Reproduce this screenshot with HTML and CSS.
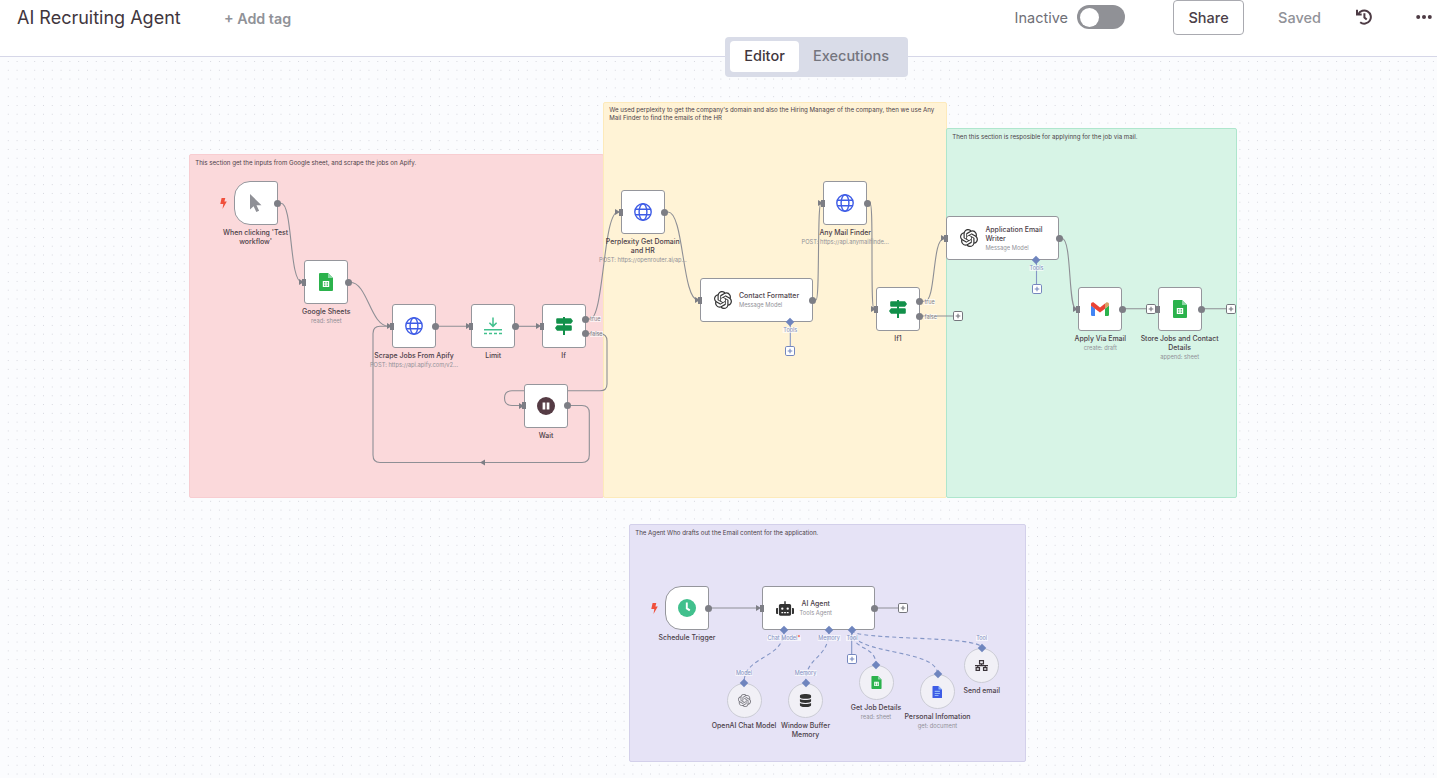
FILE: index.html
```html
<!DOCTYPE html>
<html lang="en">
<head>
    <meta charset="UTF-8">
    <meta name="viewport" content="width=device-width, initial-scale=1.0">
    <title>AI Recruiting Agent</title>
    <link rel="stylesheet" href="styles.css">
</head>
<body>
    <!-- icon definitions -->
    <svg class="defs" width="0" height="0">
        <symbol id="bolt" viewBox="0 0 7 11"><path d="M1.6 0h3.7L4.4 3.5h2.4L2.5 11l.8-4.9H.3z"/></symbol>
        <symbol id="cursor" viewBox="0 0 12 18"><path d="M0 0v15.4l3.6-3.2 2.7 5.8 2.8-1.3-2.6-5.5h5z"/></symbol>
        <symbol id="sheet" viewBox="0 0 14 18">
            <path fill="#2bb24c" d="M1 0h8l5 5v12a1 1 0 0 1-1 1H1a1 1 0 0 1-1-1V1a1 1 0 0 1 1-1z"/>
            <path fill="#8bd8a6" d="M9 0l5 5H9z"/>
            <path fill="#fff" fill-rule="evenodd" d="M3.8 8h6.4v6H3.8zM5 9.2v1.3h1.4V9.2zm2.6 0v1.3H9V9.2zM5 11.5v1.3h1.4v-1.3zm2.6 0v1.3H9v-1.3z"/>
        </symbol>
        <symbol id="globe" viewBox="0 0 18 18">
            <g fill="none" stroke="#3e5ce6" stroke-width="1.4">
                <circle cx="9" cy="9" r="8.2"/>
                <ellipse cx="9" cy="9" rx="3.9" ry="8.2"/>
                <path d="M1.3 6.2h15.4M1.3 11.8h15.4"/>
            </g>
        </symbol>
        <symbol id="limit" viewBox="0 0 18 18">
            <path fill="none" stroke="#41c08d" stroke-width="1.5" d="M9 .5v8.6M5.4 5.8L9 9.4l3.6-3.6M0 12.7h18"/>
            <path fill="none" stroke="#41c08d" stroke-width="1.5" stroke-dasharray="3 2" d="M0 16.6h18"/>
        </symbol>
        <symbol id="sign" viewBox="0 0 18 18">
            <path fill="#12904a" d="M8 0h2v1.2h6L18 4l-2 2.8H2.2a1 1 0 0 1-1-1V2.2a1 1 0 0 1 1-1H8zM8 6.8h2v1.4h5.8a1 1 0 0 1 1 1v3.6a1 1 0 0 1-1 1H2L0 11l2-2.8h6zM8 13.8h2V18H8z"/>
        </symbol>
        <symbol id="pause" viewBox="0 0 18 18">
            <circle cx="9" cy="9" r="9" fill="#553b44"/>
            <path fill="#fff" d="M5.6 5.4h2.7v7.2H5.6zM9.7 5.4h2.7v7.2H9.7z"/>
        </symbol>
        <symbol id="openai" viewBox="0 0 24 24"><path d="M22.2819 9.8211a5.9847 5.9847 0 0 0-.5157-4.9108 6.0462 6.0462 0 0 0-6.5098-2.9A6.0651 6.0651 0 0 0 4.9807 4.1818a5.9847 5.9847 0 0 0-3.9977 2.9 6.0462 6.0462 0 0 0 .7427 7.0966 5.98 5.98 0 0 0 .511 4.9107 6.051 6.051 0 0 0 6.5146 2.9001A5.9847 5.9847 0 0 0 13.2599 24a6.0557 6.0557 0 0 0 5.7718-4.2058 5.9894 5.9894 0 0 0 3.9977-2.9001 6.0557 6.0557 0 0 0-.7475-7.0729zm-9.022 12.6081a4.4755 4.4755 0 0 1-2.8764-1.0408l.1419-.0804 4.7783-2.7582a.7948.7948 0 0 0 .3927-.6813v-6.7369l2.02 1.1686a.071.071 0 0 1 .038.052v5.5826a4.504 4.504 0 0 1-4.4945 4.4944zm-9.6607-4.1254a4.4708 4.4708 0 0 1-.5346-3.0137l.142.0852 4.783 2.7582a.7712.7712 0 0 0 .7806 0l5.8428-3.3685v2.3324a.0804.0804 0 0 1-.0332.0615L9.74 19.9502a4.4992 4.4992 0 0 1-6.1408-1.6464zM2.3408 7.8956a4.485 4.485 0 0 1 2.3655-1.9728V11.6a.7664.7664 0 0 0 .3879.6765l5.8144 3.3543-2.0201 1.1685a.0757.0757 0 0 1-.071 0l-4.8303-2.7865A4.504 4.504 0 0 1 2.3408 7.872zm16.5963 3.8558L13.1038 8.364 15.1192 7.2a.0757.0757 0 0 1 .071 0l4.8303 2.7913a4.4944 4.4944 0 0 1-.6765 8.1042v-5.6772a.79.79 0 0 0-.407-.667zm2.0107-3.0231l-.142-.0852-4.7735-2.7818a.7759.7759 0 0 0-.7854 0L9.409 9.2297V6.8974a.0662.0662 0 0 1 .0284-.0615l4.8303-2.7866a4.4992 4.4992 0 0 1 6.6802 4.66zM8.3065 12.863l-2.02-1.1638a.0804.0804 0 0 1-.038-.0567V6.0742a4.4992 4.4992 0 0 1 7.3757-3.4537l-.142.0805L8.704 5.459a.7948.7948 0 0 0-.3927.6813zm1.0976-2.3654l2.602-1.4998 2.6069 1.4998v2.9994l-2.5974 1.4997-2.6067-1.4997Z"/></symbol>
        <symbol id="gmail" viewBox="0 0 18 14">
            <path fill="#4285f4" d="M0 3.5l4 3V14H1.2A1.2 1.2 0 0 1 0 12.8z"/>
            <path fill="#2bb24c" d="M18 3.5l-4 3V14h2.8a1.2 1.2 0 0 0 1.2-1.2z"/>
            <path fill="#d9a066" d="M14 1.6l1-.9c1.2-.9 3 0 3 1.5v1.6l-4 3z"/>
            <path fill="#ea4335" d="M4 1.6L3 .7C1.8-.2 0 .7 0 2.2v1.6l4 3z"/>
            <path fill="#ea4335" d="M4 1.6l5 3.8 5-3.8v5.2l-5 3.7-5-3.7z"/>
        </symbol>
        <symbol id="clock" viewBox="0 0 18 18">
            <circle cx="9" cy="9" r="9" fill="#41c08d"/>
            <path fill="none" stroke="#fff" stroke-width="1.9" d="M8.8 3.6v5.8l3 2"/>
        </symbol>
        <symbol id="robot" viewBox="0 0 20 16">
            <path fill-rule="evenodd" d="M9.2 0h1.6v3H15a1.8 1.8 0 0 1 1.8 1.8v9.400A1.800 1.800 0 0 1 15 16H5a1.800 1.800 0 0 1-1.800-1.800V4.800A1.800 1.800 0 0 1 5 3h4.200zM7 6.800a1.300 1.300 0 1 0 0 2.600 1.300 1.300 0 0 0 0-2.600zm6 0a1.300 1.300 0 1 0 0 2.600 1.300 1.300 0 0 0 0-2.600zM6 12v1.200h2V12zm3 0v1.200h2V12zm3 0v1.200h2V12zM0 8.500a1 1 0 0 1 1-1h1.200V14H1a1 1 0 0 1-1-1zM17.800 7.500H19a1 1 0 0 1 1 1V13a1 1 0 0 1-1 1h-1.200z"/>
        </symbol>
        <symbol id="database" viewBox="0 0 12 14">
            <path d="M0 2c0-2.7 12-2.7 12 0v1.4c0 2.4-12 2.4-12 0zM0 5.3c2.5 1.4 9.5 1.4 12 0v2.5c0 2.4-12 2.4-12 0zM0 9.7c2.5 1.4 9.5 1.4 12 0V12c0 2.7-12 2.7-12 0z"/>
        </symbol>
        <symbol id="doc" viewBox="0 0 10 13">
            <path fill="#3e5ce6" d="M.6 1H6l3.5 3.5v7.9a.6.6 0 0 1-.6.6H.6a.6.6 0 0 1-.6-.6V1.6A.6.6 0 0 1 .6 1z"/>
            <path fill="#8fb8f8" d="M6 1l3.5 3.5H6zM2.2 5.800h5.200v1.200H2.200zM2.200 7.900h5.200v1.200H2.200zM2.200 10h3.800v1H2.200z"/>
        </symbol>
        <symbol id="network" viewBox="0 0 14 12">
            <path fill="none" stroke="#3a3338" stroke-width="1.3" d="M4.9.8h4.2v3.4H4.9zM1.2 8.2h3.6v3H1.2zM9.2 8.2h3.6v3H9.2zM7 4.2v2M0 6.2h14M3 6.2v2M11 6.2v2"/>
        </symbol>
        <symbol id="plus" viewBox="0 0 10 10">
            <rect x=".5" y=".5" width="9" height="9" rx="1.3" fill="#fff" stroke="currentColor"/>
            <path d="M5 2.7v4.6M2.7 5h4.6" stroke="currentColor" stroke-width="1.1"/>
        </symbol>
    </svg>

    <header class="header">
        <div class="title">AI Recruiting Agent</div>
        <div class="add-tag">+ Add tag</div>
        <div class="actions">
            <span class="status">Inactive</span>
            <span class="toggle"></span>
            <button class="share">Share</button>
            <span class="saved">Saved</span>
            <svg class="history" viewBox="0 0 16 16"><path d="M2.3 5.2A6.6 6.6 0 1 1 4.2 13.3"/><path d="M1 .8v4.7h4.7M8.4 4.3v4.2l2.3 2"/></svg>
            <svg class="more" viewBox="0 0 16 4"><circle cx="2.2" cy="2" r="2"/><circle cx="8" cy="2" r="2"/><circle cx="13.8" cy="2" r="2"/></svg>
        </div>
    </header>
    <nav class="tabs">
        <span class="tab active">Editor</span>
        <span class="tab">Executions</span>
    </nav>

    <main class="canvas">
        <div class="sticky pink">This section get the inputs from Google sheet, and scrape the jobs on Apify.</div>
        <div class="sticky yellow">We used perplexity to get the company's domain and also the Hiring Manager of the company, then we use Any<br>Mail Finder to find the emails of the HR</div>
        <div class="sticky green">Then this section is resposible for applyinng for the job via mail.</div>
        <div class="sticky purple">The Agent Who drafts out the Email content for the application.</div>

        <!-- connections -->
        <svg class="edges" viewBox="0 0 1437 778">
            <g class="main">
                <path d="M278 203.3H281C293 203.3 289 282.3 302 282.3"/>
                <path d="M348 282.3H350C368 282.3 370 326.3 389 326.3"/>
                <path d="M436 326.3H469"/>
                <path d="M515 326.3H539"/>
                <path d="M586 319H590C604 319 603 212 618 212"/>
                <path d="M586 333.8H600Q607 333.8 607 341V384Q607 390.8 600 390.8H512Q504.5 390.8 504.5 398Q504.5 405.5 512 405.5H522"/>
                <path d="M568 405.5H582Q589.3 405.5 589.3 413V455Q589.3 462.5 582 462.5H380Q373 462.5 373 455V333.5Q373 326.3 380 326.3H389"/>
                <path d="M665 212H668C684 212 682 300 698 300"/>
                <path d="M813 300H816C820 300 817 203 821 203"/>
                <path d="M867 203H870C874 203 870 308.8 874 308.8"/>
                <path d="M920 301.3H925C936 301.3 932 238.5 944 238.5"/>
                <path d="M920 316H953"/>
                <path d="M1059 238.5H1062C1072 238.5 1068 308.8 1076 308.8"/>
                <path d="M1122 308.8H1147M1201.5 308.8H1226M874 608H899"/>
                <path d="M709 608H759"/>
            </g>
            <path class="arrowhead" d="M485 459.5v6l-5-3z"/>
            <g class="sub">
                <path d="M790.3 322V346M1036.5 260.5V285M851.7 630V655"/>
            </g>
            <g class="sub dashed">
                <path d="M784 630C784 660 744 655 744 683"/>
                <path d="M829 630C829 660 805.5 655 805.5 683"/>
                <path d="M851.7 630C851.7 652 876 644 876 665"/>
                <path d="M851.7 630C851.7 656 937.5 648 937.5 674"/>
                <path d="M851.7 630C851.7 641 981.7 635 981.7 648"/>
            </g>
        </svg>

        <div class="node trigger n-test"><svg class="bolt"><use href="#bolt"/></svg><svg class="icon cursor"><use href="#cursor"/></svg><i class="out"></i><div class="label">When clicking 'Test<br>workflow'</div></div>
        <div class="node n-sheets"><i class="in"></i><svg class="icon sheet"><use href="#sheet"/></svg><i class="out"></i><div class="label">Google Sheets<small>read: sheet</small></div></div>
        <div class="node n-scrape"><i class="in"></i><svg class="icon"><use href="#globe"/></svg><i class="out"></i><div class="label">Scrape Jobs From Apify<small>POST: https://api.apify.com/v2...</small></div></div>
        <div class="node n-limit"><i class="in"></i><svg class="icon"><use href="#limit"/></svg><i class="out"></i><div class="label">Limit</div></div>
        <div class="node n-if"><i class="in"></i><svg class="icon"><use href="#sign"/></svg><i class="out first"></i><i class="out second"></i><span class="port true">true</span><span class="port false">false</span><div class="label">If</div></div>
        <div class="node n-wait"><i class="in"></i><svg class="icon"><use href="#pause"/></svg><i class="out"></i><div class="label">Wait</div></div>
        <div class="node n-perplexity"><i class="in"></i><svg class="icon"><use href="#globe"/></svg><i class="out"></i><div class="label">Perplexity Get Domain<br>and HR<small>POST: https://openrouter.ai/ap...</small></div></div>
        <div class="node wide n-contact"><i class="in"></i><svg class="icon"><use href="#openai"/></svg><div class="text">Contact Formatter<small>Message Model</small></div><i class="out"></i><i class="diamond"></i></div>
        <div class="node n-anymail"><i class="in"></i><svg class="icon"><use href="#globe"/></svg><i class="out"></i><div class="label">Any Mail Finder<small>POST: https://api.anymailfinde...</small></div></div>
        <div class="node n-if1"><i class="in"></i><svg class="icon"><use href="#sign"/></svg><i class="out first"></i><i class="out second"></i><span class="port true">true</span><span class="port false">false</span><div class="label">If1</div></div>
        <div class="node wide n-writer"><i class="in"></i><svg class="icon"><use href="#openai"/></svg><div class="text">Application Email<br>Writer<small>Message Model</small></div><i class="out"></i><i class="diamond"></i></div>
        <div class="node n-apply"><i class="in"></i><svg class="icon gmail"><use href="#gmail"/></svg><i class="out"></i><div class="label">Apply Via Email<small>create: draft</small></div></div>
        <div class="node n-store"><i class="in"></i><svg class="icon sheet"><use href="#sheet"/></svg><i class="out"></i><div class="label">Store Jobs and Contact<br>Details<small>append: sheet</small></div></div>
        <div class="node trigger n-schedule"><svg class="bolt"><use href="#bolt"/></svg><svg class="icon"><use href="#clock"/></svg><i class="out"></i><div class="label">Schedule Trigger</div></div>
        <div class="node wide n-agent"><i class="in"></i><svg class="icon robot"><use href="#robot"/></svg><div class="text">AI Agent<small>Tools Agent</small></div><i class="out"></i><i class="diamond model"></i><i class="diamond memory"></i><i class="diamond tool"></i></div>

        <div class="node round n-openai"><i class="diamond"></i><svg class="icon"><use href="#openai"/></svg><div class="label">OpenAI Chat Model</div></div>
        <div class="node round n-memory"><i class="diamond"></i><svg class="icon"><use href="#database"/></svg><div class="label">Window Buffer<br>Memory</div></div>
        <div class="node round n-jobs"><i class="diamond"></i><svg class="icon"><use href="#sheet"/></svg><div class="label">Get Job Details<small>read: sheet</small></div></div>
        <div class="node round n-personal"><i class="diamond"></i><svg class="icon"><use href="#doc"/></svg><div class="label">Personal Infomation<small>get: document</small></div></div>
        <div class="node round n-send"><i class="diamond"></i><svg class="icon"><use href="#network"/></svg><div class="label">Send email</div></div>

        <span class="tag t-contact">Tools</span>
        <span class="tag t-writer">Tools</span>
        <span class="tag t-chat">Chat Model<b>*</b></span>
        <span class="tag t-mem">Memory</span>
        <span class="tag t-tool">Tool</span>
        <span class="tag t-model">Model</span>
        <span class="tag t-mem2">Memory</span>
        <span class="tag t-tool2">Tool</span>

        <svg class="plus p-if1"><use href="#plus"/></svg>
        <svg class="plus p-apply"><use href="#plus"/></svg>
        <svg class="plus p-store"><use href="#plus"/></svg>
        <svg class="plus p-agent"><use href="#plus"/></svg>
        <svg class="plus blue p-contact"><use href="#plus"/></svg>
        <svg class="plus blue p-writer"><use href="#plus"/></svg>
        <svg class="plus blue p-tool"><use href="#plus"/></svg>
    </main>
</body>
</html>
```

FILE: styles.css
```css
* {
    box-sizing: border-box;
}
body {
    margin: 0;
    height: 778px;
    overflow: hidden;
    position: relative;
    font-family: Inter, "Liberation Sans", sans-serif;
    color: #4b4048;
    background-color: #fbfcfe;
    background-image: radial-gradient(circle at 50% 50%, #d6d7de 0.6px, transparent 0.9px);
    background-size: 8.8px 8.8px;
    background-position: 3.9px 4.3px;
}
.defs {
    position: absolute;
}

/* header */
.header {
    display: flex;
    align-items: flex-start;
    height: 57px;
    padding: 0 5px 0 17px;
    background: #fff;
    border-bottom: 1px solid #d6d7e8;
    white-space: nowrap;
}
.title {
    width: 207px;
    font-size: 18px;
    line-height: 36px;
    color: #41363d;
}
.add-tag {
    font-size: 14.3px;
    font-weight: 600;
    line-height: 38px;
    color: #909298;
}
.actions {
    display: flex;
    align-items: center;
    height: 34px;
    margin-left: auto;
}
.status {
    font-size: 14.5px;
    color: #6f7077;
}
.toggle {
    width: 48px;
    height: 24px;
    margin-left: 9px;
    border-radius: 12px;
    background: #909196;
}
.toggle::before {
    content: "";
    display: block;
    width: 19px;
    height: 19px;
    margin: 2.5px;
    border-radius: 50%;
    background: #fff;
}
.share {
    width: 71px;
    height: 35px;
    margin-left: 48px;
    padding: 0;
    border: 1px solid #a9aab0;
    border-radius: 4px;
    background: #fff;
    font: 500 14.5px Inter, sans-serif;
    color: #4b4048;
}
.saved {
    margin-left: 34px;
    font-size: 14.5px;
    font-weight: 500;
    color: #919298;
}
.history {
    width: 16px;
    height: 16px;
    margin-left: 35px;
    fill: none;
    stroke: #4d3b44;
    stroke-width: 2;
}
.more {
    width: 16px;
    height: 4px;
    margin-left: 44px;
    fill: #4d3b44;
}
.tabs {
    position: absolute;
    left: 725px;
    top: 37px;
    display: flex;
    width: 183px;
    height: 40px;
    padding: 4px 5px 5px;
    border-radius: 4px;
    background: #d9dce8;
    font-size: 14.5px;
    font-weight: 500;
    line-height: 30px;
    color: #74757e;
}
.tab {
    flex: 1;
    text-align: center;
}
.tab.active {
    flex: 0 0 69px;
    border-radius: 4px;
    background: #fff;
    color: #41363d;
}

/* sticky notes */
.sticky {
    position: absolute;
    padding: 4px 5.2px;
    border: 1px solid;
    border-radius: 2px;
    font-size: 6.16px;
    line-height: 8px;
    white-space: nowrap;
    color: #4b4148;
}
.pink {
    left: 189px;
    top: 154px;
    width: 415px;
    height: 344px;
    background: #fbd9db;
    border-color: #f8cdd1;
}
.yellow {
    left: 603px;
    top: 102px;
    width: 344px;
    height: 396px;
    padding-top: 3px;
    background: #fff3d6;
    border-color: #fdeabb;
}
.green {
    left: 946px;
    top: 128px;
    width: 291px;
    height: 370px;
    background: #d7f4e6;
    border-color: #aee6cd;
}
.purple {
    left: 629px;
    top: 524px;
    width: 397px;
    height: 238px;
    background: #e6e3f6;
    border-color: #d3d0ea;
}

/* connections */
.edges {
    position: absolute;
    left: 0;
    top: 0;
    width: 1437px;
    height: 778px;
    fill: none;
}
.edges .main {
    stroke: #8e8f95;
    stroke-width: 1.1;
}
.edges .arrowhead {
    fill: #7d7e85;
}
.edges .sub {
    stroke: #8496c6;
    stroke-width: 1.1;
}
.edges .dashed {
    stroke-dasharray: 4 3;
}

/* nodes */
.node {
    position: absolute;
    display: flex;
    align-items: center;
    justify-content: center;
    width: 44px;
    height: 44px;
    border: 1px solid #95969c;
    border-radius: 3px;
    background: #fff;
}
.trigger {
    border-radius: 16px 3px 3px 16px;
}
.wide {
    width: 113px;
    justify-content: flex-start;
    padding-left: 13px;
}
.round {
    width: 35px;
    height: 35px;
    border-color: #cbccd5;
    border-radius: 50%;
    background: #f1f0f6;
}
.icon {
    width: 18px;
    height: 18px;
    fill: #333;
}
.cursor {
    width: 12px;
    fill: #8f9096;
}
.sheet {
    width: 14px;
}
.gmail {
    height: 14px;
}
.robot {
    height: 15px;
}
.round .icon {
    width: 13px;
    height: 13px;
}
.n-openai .icon {
    fill: #77767d;
}
.bolt {
    position: absolute;
    left: -15px;
    top: 16px;
    width: 7px;
    height: 11px;
    fill: #f0503c;
}
.out {
    position: absolute;
    right: -4.4px;
    top: 17.6px;
    width: 7px;
    height: 7px;
    border-radius: 50%;
    background: #7d7e85;
}
.out.first {
    top: 10.3px;
}
.out.second {
    top: 25px;
}
.in {
    position: absolute;
    left: -3px;
    top: 17.6px;
    width: 4px;
    height: 7px;
    background: #7d7e85;
}
.in::before {
    content: "";
    position: absolute;
    left: -3.5px;
    top: 0.5px;
    border: 3px solid transparent;
    border-left: 5px solid #7d7e85;
    border-right: 0;
}
.n-store .in::before {
    display: none;
}
.diamond {
    position: absolute;
    left: 86px;
    bottom: -3.5px;
    width: 6px;
    height: 6px;
    background: #6f85be;
    transform: rotate(45deg);
}
.diamond.model {
    left: 18.3px;
}
.diamond.memory {
    left: 63.4px;
}
.round .diamond {
    left: 13.5px;
    top: -3.8px;
}
.label {
    position: absolute;
    top: 46px;
    left: 50%;
    transform: translateX(-50%);
    text-align: center;
}
.label,
.text {
    font-size: 6.95px;
    font-weight: 500;
    line-height: 9px;
    white-space: nowrap;
}
.label small,
.text small {
    display: block;
    font-size: 5.75px;
    font-weight: 400;
    line-height: 9px;
    color: #919198;
}
.round .label {
    top: 37px;
}
.text {
    margin-left: 7px;
}
.n-agent .text {
    margin-left: 6px;
    text-align: center;
}
.port,
.tag {
    position: absolute;
    padding: 0 0.5px;
    font-size: 5.5px;
    line-height: 6px;
    color: #7f8087;
    background: rgba(255, 255, 255, 0.6);
}
.port {
    left: 47px;
}
.true {
    top: 11px;
}
.false {
    top: 25.6px;
}
.tag {
    transform: translate(-50%, -50%);
    white-space: nowrap;
    color: #7f8fbf;
}
.tag b {
    color: #f0503c;
}
.plus {
    position: absolute;
    width: 10px;
    height: 10px;
    transform: translate(-50%, -50%);
    color: #75767d;
}
.plus.blue {
    color: #7587be;
}

/* positions on the canvas */
.n-test { left: 233.6px; top: 181.2px; }
.n-sheets { left: 304.3px; top: 260.4px; }
.n-scrape { left: 392px; top: 304.4px; }
.n-limit { left: 471.2px; top: 304.4px; }
.n-if { left: 541.6px; top: 304.4px; }
.n-wait { left: 524px; top: 383.6px; }
.n-perplexity { left: 620.8px; top: 190px; }
.n-contact { left: 700px; top: 278px; }
.n-anymail { left: 823.2px; top: 181.2px; }
.n-if1 { left: 876px; top: 287px; }
.n-writer { left: 946.4px; top: 216.4px; }
.n-apply { left: 1078.3px; top: 287px; }
.n-store { left: 1157.6px; top: 287px; }
.n-schedule { left: 665px; top: 586px; }
.n-agent { left: 761.6px; top: 586px; }
.n-openai { left: 726.5px; top: 682.7px; }
.n-memory { left: 788px; top: 682.7px; }
.n-jobs { left: 858.5px; top: 665px; }
.n-personal { left: 920px; top: 673.8px; }
.n-send { left: 964.2px; top: 647.5px; }
.t-contact { left: 790.3px; top: 330px; }
.t-writer { left: 1036.5px; top: 268px; }
.t-chat { left: 784px; top: 638px; }
.t-mem { left: 829px; top: 638px; }
.t-tool { left: 852px; top: 638px; }
.t-model { left: 744px; top: 673px; }
.t-mem2 { left: 805.5px; top: 673px; }
.t-tool2 { left: 981.7px; top: 638px; }
.p-if1 { left: 957.5px; top: 316px; }
.p-apply { left: 1151px; top: 308.8px; }
.p-store { left: 1230.5px; top: 308.8px; }
.p-agent { left: 903px; top: 608px; }
.p-contact { left: 790px; top: 351px; }
.p-writer { left: 1036.5px; top: 289px; }
.p-tool { left: 851.5px; top: 659px; }
```
